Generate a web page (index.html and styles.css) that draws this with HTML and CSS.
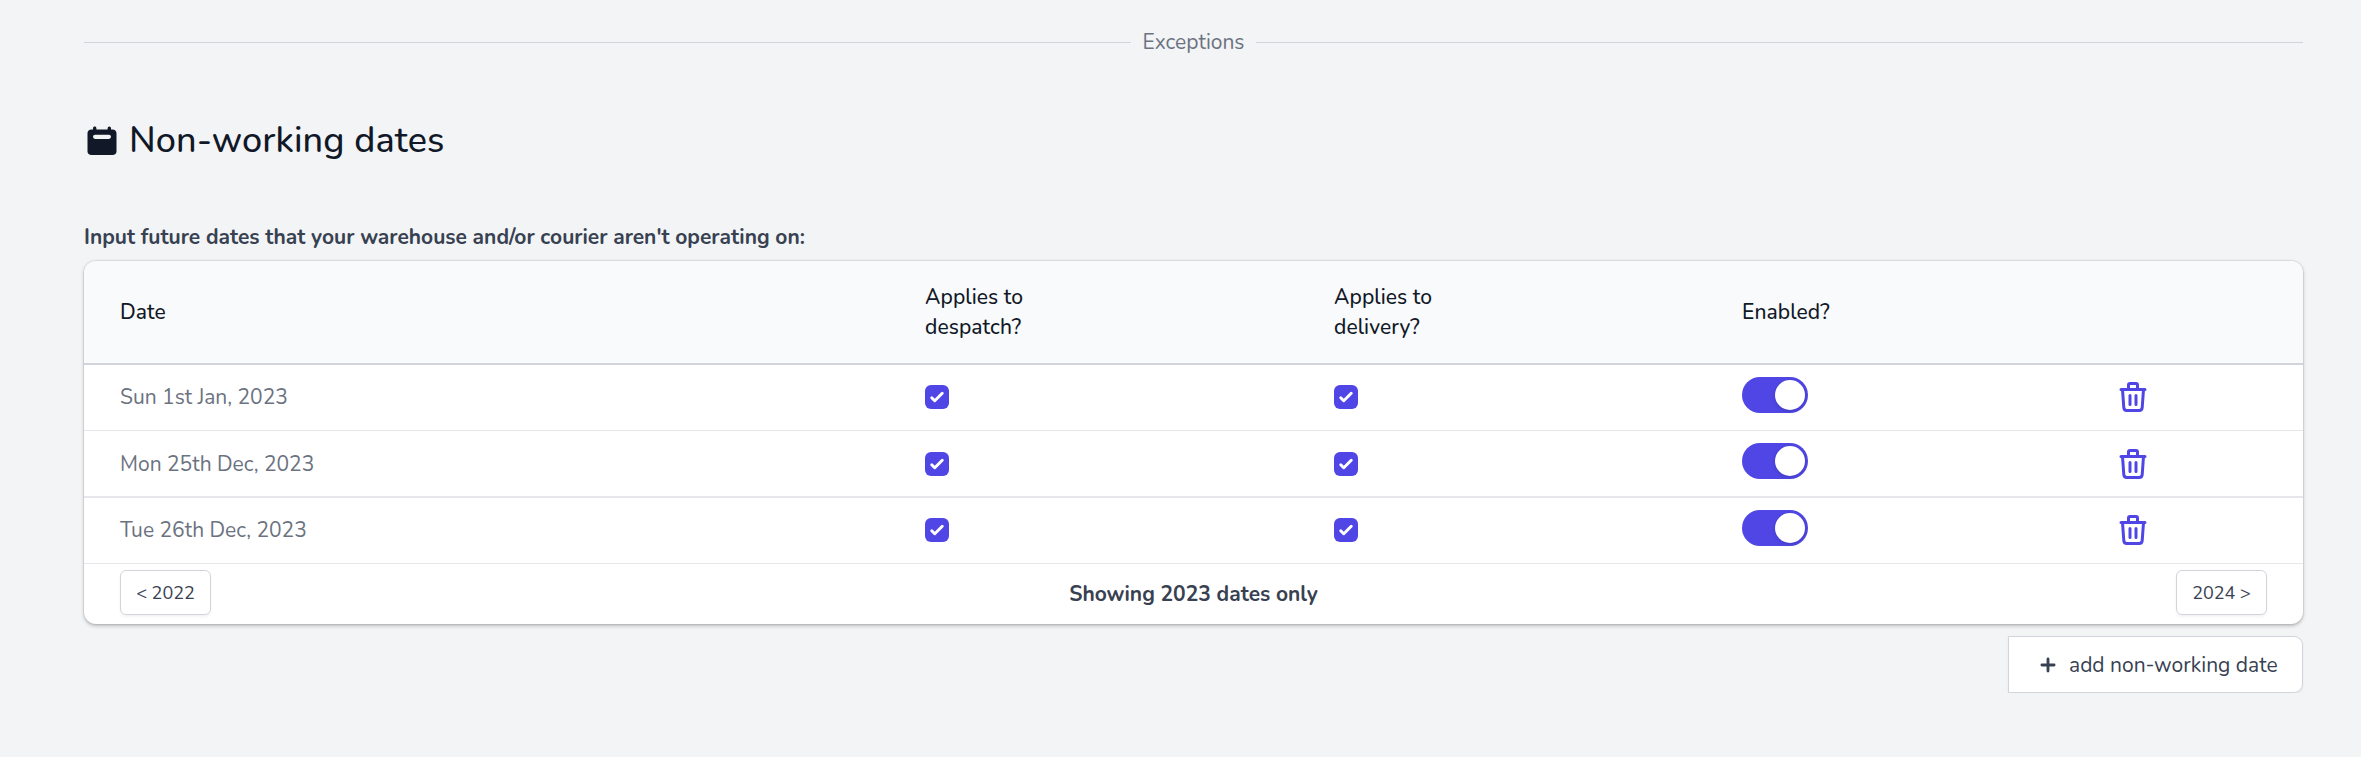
FILE: index.html
```
<!DOCTYPE html>
<html lang="en">
<head>
<meta charset="utf-8">
<title>Non-working dates</title>
<link rel="stylesheet" href="styles.css">
</head>
<body>
<svg class="defs" aria-hidden="true">
  <symbol id="trash" viewBox="0 0 24 24"><path fill="none" stroke="currentColor" stroke-width="2" stroke-linecap="round" stroke-linejoin="round" d="M19 7l-.867 12.142A2 2 0 0116.138 21H7.862a2 2 0 01-1.995-1.858L5 7m5 4v6m4-6v6m1-10V4a1 1 0 00-1-1h-4a1 1 0 00-1 1v3M4 7h16"/></symbol>
  <symbol id="check" viewBox="0 0 16 16"><path fill="#fff" d="M12.207 4.793a1 1 0 010 1.414l-5 5a1 1 0 01-1.414 0l-2-2a1 1 0 011.414-1.414L6.5 9.086l4.293-4.293a1 1 0 011.414 0z"/></symbol>
</svg>
<main class="page">
  <div class="divider"><span>Exceptions</span></div>
  <h2 class="title">
    <svg class="title-icon" viewBox="0 0 36 36"><path fill="currentColor" fill-rule="evenodd" d="M10.7 3.6c.9 0 1.7.7 1.7 1.6v1.4h11.200V5.200a1.700 1.600 0 013.400 0v1.400h1.500c2.300 0 4 1.500 4 3.600v18.200c0 2.100-1.700 3.600-4 3.600H7.500c-2.300 0-4-1.500-4-3.600V10.200c0-2.100 1.700-3.600 4-3.600H9V5.200c0-.9.800-1.600 1.700-1.600zM11.100 11.700a2.100 2.100 0 000 4.200h13.800a2.100 2.100 0 000-4.200z"/></svg>
    <span>Non-working dates</span>
  </h2>
  <p class="intro">Input future dates that your warehouse and/or courier aren't operating on:</p>
  <section class="card">
    <div class="row head">
      <div>Date</div>
      <div>Applies to<br>despatch?</div>
      <div>Applies to<br>delivery?</div>
      <div>Enabled?</div>
      <div></div>
    </div>
    <div class="row">
      <div class="date">Sun 1st Jan, 2023</div>
      <div class="box"><svg><use href="#check"/></svg></div>
      <div class="box"><svg><use href="#check"/></svg></div>
      <div class="toggle"><span class="knob"></span></div>
      <svg class="trash"><use href="#trash"/></svg>
    </div>
    <div class="row thick">
      <div class="date">Mon 25th Dec, 2023</div>
      <div class="box"><svg><use href="#check"/></svg></div>
      <div class="box"><svg><use href="#check"/></svg></div>
      <div class="toggle"><span class="knob"></span></div>
      <svg class="trash"><use href="#trash"/></svg>
    </div>
    <div class="row">
      <div class="date">Tue 26th Dec, 2023</div>
      <div class="box"><svg><use href="#check"/></svg></div>
      <div class="box"><svg><use href="#check"/></svg></div>
      <div class="toggle"><span class="knob"></span></div>
      <svg class="trash"><use href="#trash"/></svg>
    </div>
    <div class="pager">
      <button class="page-btn">&lt; 2022</button>
      <strong class="showing">Showing 2023 dates only</strong>
      <button class="page-btn">2024 &gt;</button>
    </div>
  </section>
  <button class="add">
    <svg class="plus" viewBox="0 0 16 16"><path stroke="currentColor" stroke-width="2.800" stroke-linecap="round" d="M8 1.900v12.200M1.900 8h12.200"/></svg>
    <span>add non-working date</span>
  </button>
</main>
</body>
</html>
```

FILE: styles.css
```
* { box-sizing: border-box; }
body {
  margin: 0;
  background: #f3f4f6;
  color: #374151;
  font: 21px/30px Nunito, Lato, sans-serif;
}
.defs { display: none; }
svg { display: block; }
.page {
  display: flex;
  flex-direction: column;
  padding: 27px 58px 0 84px;
}
.divider {
  display: flex;
  align-items: center;
  gap: 12px;
  color: #6b7280;
}
.divider::before, .divider::after {
  content: "";
  flex: 1;
  height: 1px;
  background: #d1d5db;
}
.title {
  display: flex;
  align-items: center;
  gap: 9px;
  margin: 60px 0 0;
  height: 48px;
  color: #111827;
  font-size: 36px;
  font-weight: 500;
  letter-spacing: .14px;
}
.title-icon { width: 36px; height: 36px; }
.intro {
  margin: 57px 0 9px;
  font-weight: 700;
}
.card {
  overflow: hidden;
  height: 363px;
  border-radius: 12px;
  background: #fff;
  box-shadow: 0 0 0 1px rgba(0,0,0,.06), 0 1.5px 4px rgba(0,0,0,.14), 0 1.5px 3px rgba(0,0,0,.1);
}
.row {
  display: grid;
  grid-template-columns: 805px 409px 408px 373px 1fr;
  padding-left: 36px;
  height: 66px;
  align-items: start;
  border-bottom: 1px solid #e5e7eb;
}
.head {
  height: 104px;
  align-items: center;
  border-bottom: 2px solid #d1d5db;
  background: #f9fafb;
  color: #111827;
  font-weight: 500;
  letter-spacing: .08px;
}
.date { margin-top: 17px; color: #6b7280; }
.box {
  width: 24px;
  height: 24px;
  margin-top: 20px;
  border-radius: 6px;
  background: #4f46e5;
}
.box svg { width: 24px; height: 24px; }
.toggle {
  display: flex;
  justify-content: flex-end;
  width: 66px;
  height: 36px;
  margin-top: 12px;
  padding: 3px;
  border-radius: 18px;
  background: #4f46e5;
}
.knob {
  width: 30px;
  height: 30px;
  border-radius: 50%;
  background: #fff;
  box-shadow: 0 1.5px 4px rgba(0,0,0,.15);
}
.trash { width: 36px; height: 36px; margin-top: 14px; color: #4f46e5; }
.thick { height: 67px; border-bottom-width: 2px; }
.thick .date { margin-top: 18px; }
.thick .box { margin-top: 21px; }
.thick .trash { margin-top: 15px; }
.pager {
  display: flex;
  align-items: center;
  justify-content: space-between;
  height: 57px;
  padding: 0 36px;
}
.showing { padding-top: 2px; }
button {
  display: flex;
  align-items: center;
  justify-content: center;
  border: 1px solid #d1d5db;
  background: #fff;
  color: #374151;
  font-family: inherit;
  box-shadow: 0 1.5px 3px rgba(0,0,0,.05);
}
.page-btn {
  width: 91px;
  height: 45px;
  border-radius: 6px;
  font-size: 18px;
  padding: 0;
}
.add {
  align-self: flex-end;
  width: 295px;
  height: 57px;
  margin-top: 12px;
  padding: 0 24px 0 31px;
  gap: 13px;
  justify-content: flex-start;
  border-radius: 0 9px 9px 0;
  font-size: 21px;
  white-space: nowrap;
}
.plus { flex: none; width: 16px; height: 16px; }
```
